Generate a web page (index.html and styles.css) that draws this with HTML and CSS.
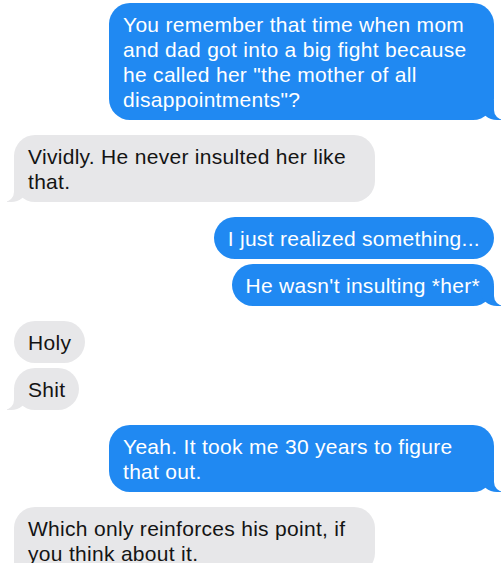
FILE: index.html
```html
<!DOCTYPE html>
<html lang="en">
<head>
    <meta charset="utf-8" />
    <meta name="viewport" content="width=device-width, initial-scale=1.0">
    <title>Messages</title>
    <link rel="stylesheet" href="styles.css">
</head>
<body>
    <div class="thread">
        <div class="group sent">
            <p class="bubble tail">You remember that time when mom and dad got into a big fight because he called her "the mother of all disappointments"?</p>
        </div>
        <div class="group received">
            <p class="bubble tail">Vividly. He never insulted her like that.</p>
        </div>
        <div class="group sent">
            <p class="bubble">I just realized something...</p>
            <p class="bubble tail">He wasn't insulting *her*</p>
        </div>
        <div class="group received">
            <p class="bubble">Holy</p>
            <p class="bubble tail">Shit</p>
        </div>
        <div class="group sent">
            <p class="bubble tail">Yeah. It took me 30 years to figure that out.</p>
        </div>
        <div class="group received">
            <p class="bubble tail">Which only reinforces his point, if you think about it.</p>
        </div>
    </div>
</body>
</html>
```

FILE: styles.css
```css
html,
body {
    margin: 0;
    height: 100%;
    overflow: hidden;
    background: #fff;
}
.thread {
    display: flex;
    flex-direction: column;
    gap: 15px;
    padding: 3px 10px 0 14px;
    font-family: "Liberation Sans", Arial, sans-serif;
    font-size: 21px;
    letter-spacing: 0.3px;
    line-height: 25px;
}
.group {
    display: flex;
    flex-direction: column;
    gap: 5px;
}
.sent {
    align-items: flex-end;
}
.received {
    align-items: flex-start;
}
.bubble {
    position: relative;
    box-sizing: border-box;
    margin: 0;
    padding: 8.5px 14px;
    border-radius: 21px;
}
.sent .bubble {
    max-width: 385px;
    background: #2089f2;
    color: #fff;
}
.received .bubble {
    max-width: 361px;
    background: #e7e7e9;
    color: #141414;
}

/* bubble tails */
.bubble.tail::before,
.bubble.tail::after {
    content: "";
    position: absolute;
    bottom: 0;
    height: 20px;
}
.sent .tail::before {
    right: -7px;
    width: 20px;
    background: #2089f2;
    border-bottom-left-radius: 16px 14px;
}
.sent .tail::after {
    right: -26px;
    width: 26px;
    background: #fff;
    border-bottom-left-radius: 10px;
}
.received .tail::before {
    left: -7px;
    width: 20px;
    background: #e7e7e9;
    border-bottom-right-radius: 16px 14px;
}
.received .tail::after {
    left: -26px;
    width: 26px;
    background: #fff;
    border-bottom-right-radius: 10px;
}
```
